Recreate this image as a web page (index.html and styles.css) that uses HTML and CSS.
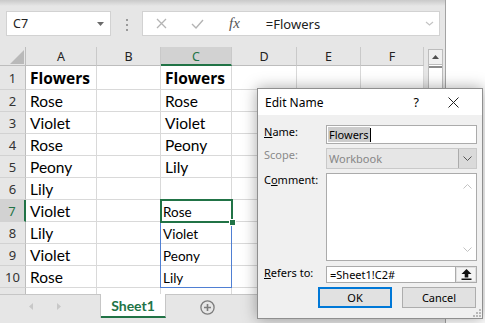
FILE: index.html
```html
<!DOCTYPE html>
<html lang="en">
<head>
    <meta charset="UTF-8">
    <title>Edit Name</title>
    <link rel="stylesheet" href="styles.css">
</head>
<body>
<div class="screen">
    <div class="excel">
        <div class="formula-bar">
            <div class="name-box">
                <span>C7</span>
                <svg width="7" height="4" viewBox="0 0 7 4"><path d="M0 0h7L3.5 4z" fill="#6a6a6a"/></svg>
            </div>
            <div class="grip"><i></i><i></i><i></i></div>
            <div class="formula-box">
                <svg class="fb-x" width="11" height="11" viewBox="0 0 11 11"><path d="M1 1l9 9M10 1l-9 9" stroke="#b4b4b4" stroke-width="1.3" fill="none"/></svg>
                <svg class="fb-check" width="13" height="10" viewBox="0 0 13 10"><path d="M1 5l4 4 7-8" stroke="#b4b4b4" stroke-width="1.4" fill="none"/></svg>
                <span class="fx">fx</span>
                <span class="formula-text">=Flowers</span>
                <svg class="fb-chev" width="9" height="5" viewBox="0 0 9 5"><path d="M1 1l3.5 3 3.5-3" stroke="#c4c4c4" stroke-width="1.2" fill="none"/></svg>
            </div>
        </div>

        <div class="sheet">
            <div class="grid">
                <div class="corner"><svg width="14" height="14" viewBox="0 0 14 14"><path d="M14 0v14H0z" fill="#b9b9b9"/></svg></div>
                <div class="ch">A</div><div class="ch">B</div><div class="ch sel">C</div><div class="ch">D</div><div class="ch">E</div><div class="ch">F</div>

                <div class="rh">1</div><div class="c b">Flowers</div><div class="c"></div><div class="c b">Flowers</div><div class="c"></div><div class="c"></div><div class="c"></div>
                <div class="rh">2</div><div class="c">Rose</div><div class="c"></div><div class="c">Rose</div><div class="c"></div><div class="c"></div><div class="c"></div>
                <div class="rh">3</div><div class="c">Violet</div><div class="c"></div><div class="c">Violet</div><div class="c"></div><div class="c"></div><div class="c"></div>
                <div class="rh">4</div><div class="c">Rose</div><div class="c"></div><div class="c">Peony</div><div class="c"></div><div class="c"></div><div class="c"></div>
                <div class="rh">5</div><div class="c">Peony</div><div class="c"></div><div class="c">Lily</div><div class="c"></div><div class="c"></div><div class="c"></div>
                <div class="rh">6</div><div class="c">Lily</div><div class="c"></div><div class="c"></div><div class="c"></div><div class="c"></div><div class="c"></div>
                <div class="rh sel">7</div><div class="c">Violet</div><div class="c"></div><div class="c sm">Rose</div><div class="c"></div><div class="c"></div><div class="c"></div>
                <div class="rh">8</div><div class="c">Lily</div><div class="c"></div><div class="c sm">Violet</div><div class="c"></div><div class="c"></div><div class="c"></div>
                <div class="rh">9</div><div class="c">Violet</div><div class="c"></div><div class="c sm">Peony</div><div class="c"></div><div class="c"></div><div class="c"></div>
                <div class="rh">10</div><div class="c">Rose</div><div class="c"></div><div class="c sm">Lily</div><div class="c"></div><div class="c"></div><div class="c"></div>
                <div class="rh"></div><div class="c"></div><div class="c"></div><div class="c"></div><div class="c"></div><div class="c"></div><div class="c"></div>

                <div class="spill"></div>
                <div class="active"><span class="handle"></span></div>
            </div>
            <div class="vscroll">
                <div class="vs-up"><svg width="7" height="4" viewBox="0 0 7 4"><path d="M0 4h7L3.5 0z" fill="#505050"/></svg></div>
                <div class="vs-thumb"></div>
            </div>
        </div>

        <div class="tabs">
            <div class="tab-nav">
                <svg width="4" height="7" viewBox="0 0 4 7"><path d="M4 0v7L0 3.5z" fill="#c8c8c8"/></svg>
                <svg width="4" height="7" viewBox="0 0 4 7"><path d="M0 0v7l4-3.5z" fill="#c8c8c8"/></svg>
            </div>
            <div class="sheet-tab">Sheet1</div>
            <svg class="tab-add" width="15" height="15" viewBox="0 0 15 15"><circle cx="7.5" cy="7.5" r="6.6" stroke="#7c7c7c" stroke-width="1.3" fill="none"/><path d="M7.5 4v7M4 7.5h7" stroke="#7c7c7c" stroke-width="1.6"/></svg>
        </div>
    </div>

    <div class="dialog">
        <div class="dlg-title">
            <span>Edit Name</span>
            <span class="dlg-help">?</span>
            <svg class="dlg-close" width="11" height="11" viewBox="0 0 11 11"><path d="M0.5 0.5l10 10M10.5 0.5l-10 10" stroke="#222" stroke-width="1"/></svg>
        </div>
        <div class="dlg-body">
            <div class="lbl"><u>N</u>ame:</div>
            <div class="field name-field"><span class="selected">Flowers</span><span class="caret"></span></div>

            <div class="lbl disabled">Scope:</div>
            <div class="field scope-field">
                <span>Workbook</span>
                <span class="dd-btn"><svg width="9" height="5" viewBox="0 0 9 5"><path d="M0.5 0.5l4 4 4-4" stroke="#555" stroke-width="1" fill="none"/></svg></span>
            </div>

            <div class="lbl">C<u>o</u>mment:</div>
            <div class="field comment-field">
                <svg width="9" height="5" viewBox="0 0 9 5"><path d="M0.5 4.5l4-4 4 4" stroke="#c2c2c2" stroke-width="1" fill="none"/></svg>
                <svg width="9" height="5" viewBox="0 0 9 5"><path d="M0.5 0.5l4 4 4-4" stroke="#c2c2c2" stroke-width="1" fill="none"/></svg>
            </div>

            <div class="lbl refers-lbl"><u>R</u>efers to:</div>
            <div class="field refers-field">
                <span>=Sheet1!C2#</span>
                <span class="ref-btn"><svg width="11" height="11" viewBox="0 0 11 11"><path d="M5.5 0L10.5 5H7.3v3.5H3.7V5H0.5z M0.5 9.6h10v1.4h-10z" fill="#111"/></svg></span>
            </div>

            <div class="dlg-buttons">
                <button class="btn default">OK</button>
                <button class="btn">Cancel</button>
            </div>
        </div>
        <svg class="resize-grip" width="9" height="9" viewBox="0 0 9 9">
            <rect x="7" y="1" width="2" height="2" fill="#b8b8b8"/>
            <rect x="4" y="4" width="2" height="2" fill="#b8b8b8"/><rect x="7" y="4" width="2" height="2" fill="#b8b8b8"/>
            <rect x="1" y="7" width="2" height="2" fill="#b8b8b8"/><rect x="4" y="7" width="2" height="2" fill="#b8b8b8"/><rect x="7" y="7" width="2" height="2" fill="#b8b8b8"/>
        </svg>
    </div>
</div>
</body>
</html>
```

FILE: styles.css
```css
body {margin: 0; background: #fff; font-family: "Noto Sans", "Open Sans", sans-serif; color: #000}
.screen {position: relative; width: 485px; height: 323px; overflow: hidden}

/* excel window */
.excel {width: 445px; height: 323px; border-right: 1px solid #a3a3a3; display: flex; flex-direction: column; background: #e6e6e6 linear-gradient(#c9c9c9, #e6e6e6 6px) no-repeat}
.formula-bar {height: 47px; box-sizing: border-box; padding: 11px 0 0 6px; display: flex; align-items: flex-start; flex-shrink: 0}
.name-box {width: 105px; height: 25px; box-sizing: border-box; background: #fff; border: 1px solid #d2d2d2; display: flex; align-items: center; justify-content: space-between; padding: 0 6px; font-size: 12.5px; color: #222}
.grip {width: 31px; display: flex; flex-direction: column; align-items: center; gap: 3px; padding-top: 8px}
.grip i {display: block; width: 2px; height: 2px; background: #9a9a9a}
.formula-box {width: 298px; height: 25px; box-sizing: border-box; background: #fff; border: 1px solid #d2d2d2; display: flex; align-items: center; padding-left: 13px}
.fb-check {margin-left: 24px}
.fx {margin-left: 25px; font-family: "Liberation Serif", serif; font-style: italic; font-size: 15px; color: #555; line-height: 1}
.formula-text {margin-left: 26px; font-size: 13px; color: #222}
.fb-chev {margin-left: auto; margin-right: 5px}

/* grid */
.sheet {display: flex; height: 247px; overflow: hidden; flex-shrink: 0}
.grid {position: relative; display: grid; grid-template-columns: 26px 71px 64px 71px 65px 64px 63px; grid-template-rows: 19px 24px repeat(10, 22px); width: 424px; background: #fff; align-self: flex-start}
.corner {background: #e6e6e6; border-right: 1px solid #bdbdbd; border-bottom: 1px solid #bdbdbd; display: flex; align-items: flex-end; justify-content: flex-end; padding: 0 1px 1px 0}
.ch {background: #e6e6e6; border-right: 1px solid #c9c9c9; border-bottom: 1px solid #bdbdbd; display: flex; align-items: center; justify-content: center; font-size: 12.5px; color: #222; padding-top: 1px}
.ch.sel {background: #d2d2d2; color: #217346; border-bottom: 2px solid #217346}
.rh {background: #e6e6e6; border-right: 1px solid #bdbdbd; border-bottom: 1px solid #d2d2d2; display: flex; align-items: center; justify-content: center; font-size: 13px; color: #333}
.rh.sel {background: #d2d2d2; color: #217346; border-right: 2px solid #217346}
.c {border-right: 1px solid #d9d9d9; border-bottom: 1px solid #d9d9d9; display: flex; align-items: center; padding-left: 4px; font-family: Lato, "Noto Sans", sans-serif; font-size: 15.5px; white-space: nowrap; overflow: hidden}
.c.b {font-family: "Open Sans", sans-serif; font-weight: 700; font-size: 15.5px}
.c.sm {font-size: 13.5px; padding-left: 2px; padding-top: 2px}
.spill {position: absolute; left: 160px; top: 152px; width: 72px; height: 89px; box-sizing: border-box; border: 1px solid #4f7fd3}
.active {position: absolute; left: 160px; top: 152px; width: 73px; height: 24px; box-sizing: border-box; border: 2px solid #217346}
.handle {position: absolute; right: -5px; bottom: -5px; width: 5px; height: 5px; background: #217346; border: 1px solid #fff}

.vscroll {margin: 2px 0 0 4px; width: 15px; height: 260px; box-sizing: border-box; border: 1px solid #bcbcbc; background: #fff}
.vs-up {height: 14px; border-bottom: 1px solid #bcbcbc; background: #f0f0f0; display: flex; align-items: center; justify-content: center}
.vs-thumb {border-top: 2px solid #8c8c8c; margin-top: 1px}

/* sheet tabs */
.tabs {height: 24px; box-sizing: border-box; border-top: 1px solid #c6c6c6; display: flex; align-items: stretch; flex-shrink: 0}
.tab-nav {width: 101px; border-right: 1px solid #c6c6c6; display: flex; align-items: center; padding-left: 29px; gap: 24px; box-sizing: border-box}
.sheet-tab {width: 64px; background: #fff; border-right: 1px solid #c6c6c6; border-bottom: 2px solid #217346; display: flex; align-items: center; justify-content: center; font-family: Lato, sans-serif; font-weight: 700; font-size: 14px; color: #217346; margin-top: -1px}
.tab-add {margin: 5px 0 0 34px}

/* dialog */
.dialog {position: absolute; left: 257px; top: 88px; width: 226px; height: 231px; box-sizing: border-box; border: 1px solid #8f8f8f; background: #f0f0f0; box-shadow: 0 0 14px rgba(0,0,0,0.35); display: flex; flex-direction: column; font-size: 11px}
.dlg-title {height: 26px; background: #fff; display: flex; align-items: center; padding-left: 7px; font-size: 12px; flex-shrink: 0}
.dlg-help {margin-left: auto; font-size: 12.5px}
.dlg-close {margin: 0 23px 0 29px}
.dlg-body {display: grid; grid-template-columns: 62px 151px; grid-template-rows: 19px 21px 88px 18px 21px; row-gap: 4px; padding: 10px 0 0 6px}
.lbl {line-height: 14px; white-space: nowrap}
.lbl.disabled {color: #8a8a8a}
.refers-lbl, .refers-field {margin-top: 1px}
.field {box-sizing: border-box; background: #fff; border: 1px solid #ababab; display: flex; align-items: center}
.name-field {padding-left: 1px}
.selected {background: #cccccc; padding: 0 1px; line-height: 15px}
.caret {width: 1px; height: 14px; background: #000}
.scope-field {background: #e6e6e6; border-color: #c9c9c9; padding-left: 2px; color: #868686; justify-content: space-between}
.dd-btn {width: 17px; align-self: stretch; background: #dadada; border-left: 1px solid #ababab; display: flex; align-items: center; justify-content: center}
.comment-field {flex-direction: column; align-items: flex-end; justify-content: space-between; padding: 10px 4px 8px 0}
.refers-field {padding-left: 3px; justify-content: space-between}
.ref-btn {width: 20px; align-self: stretch; border-left: 1px solid #ababab; background: #f4f4f4; box-shadow: inset 0 0 0 1px #e0e0e0; display: flex; align-items: center; justify-content: center}
.dlg-buttons {grid-column: 1 / -1; display: flex; justify-content: flex-end; gap: 10px; margin-right: 1px}
.btn {width: 74px; height: 21px; box-sizing: border-box; background: #e1e1e1; border: 1px solid #adadad; font-family: "Noto Sans", sans-serif; font-size: 11px; color: #000; padding: 0}
.btn.default {border: 2px solid #0078d7}
.resize-grip {position: absolute; right: 1px; bottom: 1px}
```
